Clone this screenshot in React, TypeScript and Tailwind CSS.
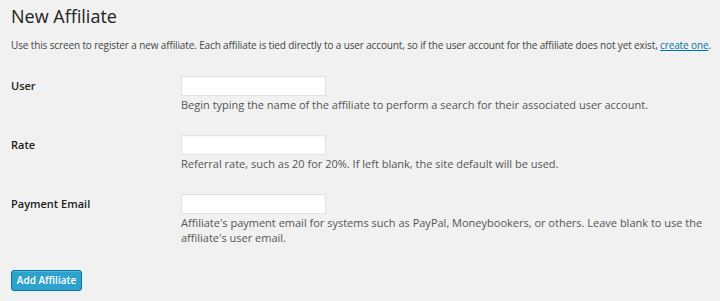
import React from 'react';

const rows = [
  {
    label: 'User',
    desc: 'Begin typing the name of the affiliate to perform a search for their associated user account.',
  },
  {
    label: 'Rate',
    desc: 'Referral rate, such as 20 for 20%. If left blank, the site default will be used.',
  },
  {
    label: 'Payment Email',
    desc: "Affiliate's payment email for systems such as PayPal, Moneybookers, or others. Leave blank to use the affiliate's user email.",
  },
];

export default function App() {
  return (
    <div className="min-h-screen bg-[#f1f1f1] pl-[11px] pr-[8px] text-[#444] font-['Open_Sans',sans-serif]">
      <h1 className="pt-[4px] text-[18px] leading-[24px] text-[#222] font-normal">New Affiliate</h1>
      <p className="mt-[9px] text-[10px] tracking-[-0.13px] leading-[16px] text-[#444] whitespace-nowrap">
        Use this screen to register a new affiliate. Each affiliate is tied directly to a user account, so if the user
        account for the affiliate does not yet exist,{' '}
        <a href="#" className="text-[#0074a2] underline">
          create one
        </a>
        .
      </p>

      <form className="mt-[23px]">
        <div className="flex flex-col gap-[23px]">
          {rows.map((row) => (
            <div key={row.label} className="flex">
              <label className="w-[170px] shrink-0 text-[11px] leading-[20px] font-semibold text-[#222]">
                {row.label}
              </label>
              <div className="flex-1">
                <input
                  type="text"
                  className="block w-[145px] h-[20px] bg-white border border-[#e2e2e2] shadow-[inset_0_1px_2px_rgba(0,0,0,0.04)] outline-none"
                />
                <p className="text-[11px] leading-[15px] pt-[1px] text-[#555]">{row.desc}</p>
              </div>
            </div>
          ))}
        </div>
        <div className="mt-[21px]">
          <button
            type="button"
            className="w-[71px] h-[21px] rounded-[3px] bg-[#2ea2cc] border border-[#0074a2] text-white text-[10px] font-semibold leading-none shadow-[inset_0_1px_0_rgba(120,200,230,0.5)]"
          >
            Add Affiliate
          </button>
        </div>
      </form>
    </div>
  );
}
